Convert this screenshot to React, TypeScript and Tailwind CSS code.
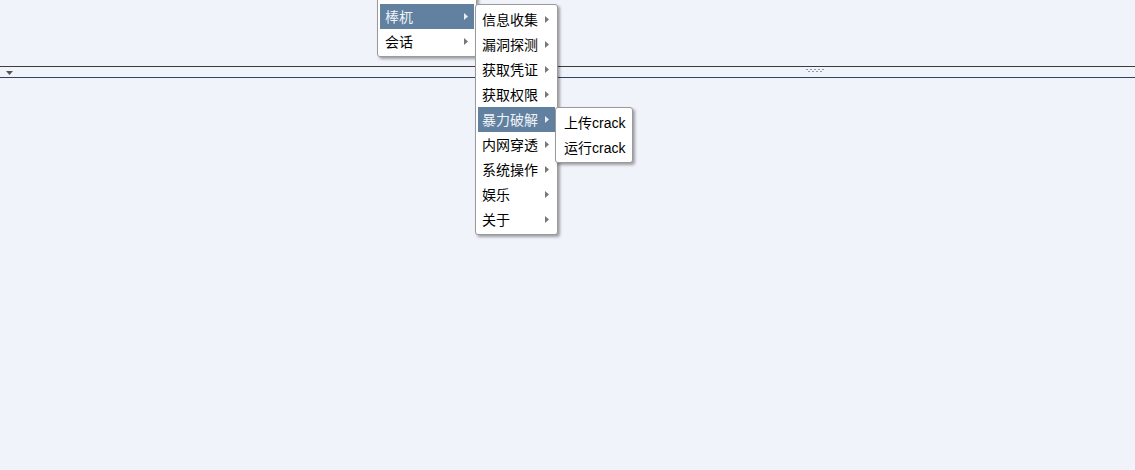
import React from "react";

type Item = { label: string; active?: boolean; sub?: boolean };

const font = { fontFamily: '"Liberation Sans", "Noto Sans CJK SC", sans-serif' };

function Arrow({ active }: { active?: boolean }) {
  return (
    <svg width="4" height="7" viewBox="0 0 4 7" className="shrink-0">
      <path d="M0 0 L4 3.5 L0 7 Z" fill={active ? "#e8eef6" : "#777"} />
    </svg>
  );
}

function MenuRow({ item, pl, arrowRight }: { item: Item; pl: string; arrowRight: string }) {
  return (
    <div
      className={`flex h-[25px] items-center justify-between whitespace-nowrap ${pl} ${arrowRight} text-[14px] leading-none ${
        item.active ? "bg-[#62809f] text-[#eef3f9]" : "text-black"
      }`}
    >
      <span className="mt-[1px] shrink-0">{item.label}</span>
      {item.sub && <Arrow active={item.active} />}
    </div>
  );
}

function Menu({ items, className, pl, arrowRight }: { items: Item[]; className: string; pl: string; arrowRight: string }) {
  return (
    <div
      className={`absolute rounded-[3px] border border-[#9a9a9a] bg-white px-[2px] shadow-[2px_2px_3px_rgba(0,0,0,0.35)] ${className}`}
    >
      {items.map((it) => (
        <MenuRow key={it.label} item={it} pl={pl} arrowRight={arrowRight} />
      ))}
    </div>
  );
}

export default function App() {
  const main: Item[] = [
    { label: "棒杌", active: true, sub: true },
    { label: "会话", sub: true },
  ];
  const tools: Item[] = [
    { label: "信息收集", sub: true },
    { label: "漏洞探测", sub: true },
    { label: "获取凭证", sub: true },
    { label: "获取权限", sub: true },
    { label: "暴力破解", sub: true, active: true },
    { label: "内网穿透", sub: true },
    { label: "系统操作", sub: true },
    { label: "娱乐", sub: true },
    { label: "关于", sub: true },
  ];
  const crack: Item[] = [{ label: "上传crack" }, { label: "运行crack" }];

  return (
    <div className="relative flex h-[470px] w-[1135px] flex-col overflow-hidden bg-[#f0f3fa]" style={font}>
      {/* north panel */}
      <div className="h-[67px] border-b border-[#3c3c3c]" />

      {/* splitter */}
      <div className="relative flex h-[11px] items-center border-b border-[#2c4660] pl-[6px]">
        <svg width="7" height="4" viewBox="0 0 7 4" className="mt-[1px]">
          <path d="M0 0 H7 L3.5 4 Z" fill="#555" />
        </svg>
        <svg width="18" height="3" viewBox="0 0 18 3" className="absolute left-[806px] top-[2px]">
          {[0, 4, 8, 12, 16].map((x) => (
            <rect key={x} x={x} y={0} width="2" height="1" fill="#8a9bb0" />
          ))}
          {[2, 6, 10, 14].map((x) => (
            <rect key={x} x={x} y={2} width="2" height="1" fill="#8a9bb0" />
          ))}
        </svg>
      </div>

      <div className="flex-1" />

      {/* context menus */}
      <Menu items={main} className="left-[377px] top-[-10px] z-10 w-[100px] pt-[13px] pb-[2px]" pl="pl-[5px]" arrowRight="pr-[6px]" />
      <Menu items={tools} className="left-[475px] top-[4px] z-20 w-[83px] py-[2px]" pl="pl-[4px]" arrowRight="pr-[6px]" />
      <Menu items={crack} className="left-[555px] top-[107px] z-30 w-[78px] py-[2px]" pl="pl-[6px]" arrowRight="pr-[4px]" />
    </div>
  );
}
